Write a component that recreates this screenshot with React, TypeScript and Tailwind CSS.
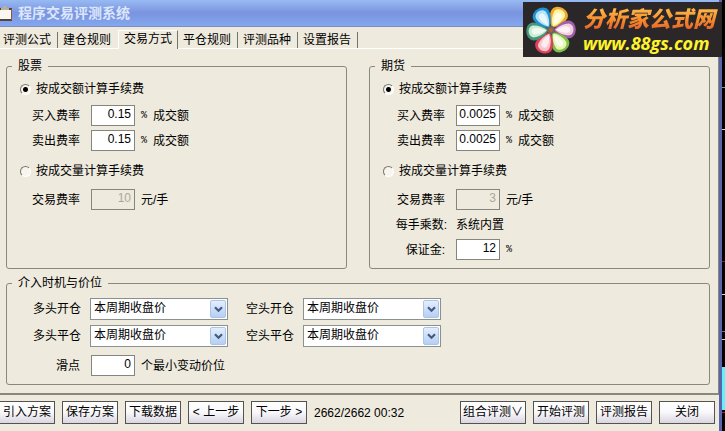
import { useState } from "react";
import type { ReactNode } from "react";

const TABS = ["评测公式", "建仓规则", "交易方式", "平仓规则", "评测品种", "设置报告"];
const PRICES = ["本周期收盘价", "本周期开盘价", "下周期开盘价"];
const PETALS = [
  { angle: 28, color: "#f0a92c", inner: "#fdf3a0" },
  { angle: 88, color: "#9c5fa8", inner: "#f3cfe0" },
  { angle: 146, color: "#7fbf45", inner: "#e6f5b8" },
  { angle: 204, color: "#dc4258", inner: "#f9c3cb" },
  { angle: 265, color: "#46957a", inner: "#c9ecd4" },
  { angle: 326, color: "#2191d6", inner: "#b4e4f8" },
];

function Group({ title, children }: { title: string; children: ReactNode }) {
  return (
    <fieldset className="min-w-0 rounded-[3px] border border-[#8a887c] pb-2">
      <legend className="ml-[5px] px-1.5 leading-[14px]">{title}</legend>
      {children}
    </fieldset>
  );
}

function FeeMode({ name, label, checked, onSelect }: { name: string; label: string; checked: boolean; onSelect: () => void }) {
  return (
    <label className="flex h-5 items-center gap-[5px] pl-[13px]">
      <input
        type="radio"
        name={name}
        checked={checked}
        onChange={onSelect}
        className="size-[11px] appearance-none rounded-full border border-t-[#77756b] border-r-white border-b-white border-l-[#77756b] bg-[#f7f5ee] checked:bg-[radial-gradient(circle,#000_0_2px,#f7f5ee_3px)]"
      />
      {label}
    </label>
  );
}

function Field({ id, label, labelWidth, value, unit, disabled }: { id: string; label: string; labelWidth: string; value: string; unit?: ReactNode; disabled?: boolean }) {
  return (
    <div className="flex h-[21px] items-center">
      <label htmlFor={id} className={`${labelWidth} shrink-0 text-right`}>{label}</label>
      <input
        id={id}
        type="text"
        defaultValue={value}
        disabled={disabled}
        className="ml-[11px] h-[21px] w-11 border border-[#85857d] bg-white pr-[3px] pb-[3px] text-right disabled:bg-[#eeeadd] disabled:text-[#aca899]"
      />
      <span className="ml-1.5 flex items-center gap-1.5">{unit}</span>
    </div>
  );
}

function Percent() {
  return <span className="font-['Liberation_Mono',monospace] text-[10px]">%</span>;
}

function PriceSelect({ id, label }: { id: string; label: string }) {
  return (
    <div className="flex h-[22px] items-center gap-[9px]">
      <label htmlFor={id}>{label}</label>
      <div className="relative">
        <select id={id} className="block h-[22px] w-[138px] appearance-none border border-[#8a9191] bg-white pr-5 pb-0.5 pl-[3px]">
          {PRICES.map(p => <option key={p}>{p}</option>)}
        </select>
        <span className="pointer-events-none absolute top-0.5 right-0.5 flex h-[18px] w-4 items-center justify-center rounded-[2px] border border-[#adc4e4] bg-linear-to-b from-[#e4eefd] to-[#b4cff5]">
          <svg width="9" height="7" viewBox="0 0 9 7">
            <path d="M1 1.2 4.5 4.7 8 1.2" fill="none" stroke="#46597f" strokeWidth="2.2" />
          </svg>
        </span>
      </div>
    </div>
  );
}

function PushButton({ children, wide }: { children: ReactNode; wide?: boolean }) {
  return (
    <button
      type="button"
      className={`${wide ? "w-[66px]" : "w-14"} h-[23px] shrink-0 border border-[#55534d] bg-linear-to-b from-white via-[#f8f7fa] to-[#d9d6e0] pb-0.5 whitespace-nowrap`}
    >
      {children}
    </button>
  );
}

function SiteBanner() {
  return (
    <div className="absolute top-0.5 right-[3px] flex h-[55px] w-[199px] items-center bg-[#2b2729]">
      <svg className="ml-0.5 shrink-0" width="52" height="52" viewBox="-26 -26 52 52">
        {PETALS.map(p => (
          <g key={p.angle} transform={`rotate(${p.angle})`}>
            <path d="M0-2C-5-7-9-12-9-18C-8-27 8-27 9-18C9-12 5-7 0-2Z" fill={p.color} />
            <path d="M0-4C-4-8-6-13-6-18C-5-24 5-24 6-18C6-13 4-8 0-4Z" fill={p.inner} />
            <path d="M0-5C-2-9-4-13-3-17C-2-20 2-20 3-17C4-13 2-9 0-5Z" fill="#fff" opacity="0.7" />
          </g>
        ))}
        <circle r="4" fill="#6d6660" />
        <circle r="2" fill="#b8603c" />
      </svg>
      <div className="ml-1.5 whitespace-nowrap italic">
        <div className="bg-linear-to-b from-[#ffc04d] via-[#f58a2c] to-[#e0552a] bg-clip-text pr-1 text-[22px] leading-[26px] font-black text-transparent">分析家公式网</div>
        <div className="font-['Open_Sans','Noto_Sans',sans-serif] text-[18px] leading-5 font-bold text-[#fff32a]">www.88gs.com</div>
      </div>
    </div>
  );
}

export default function App() {
  const [tab, setTab] = useState(2);
  const [stockMode, setStockMode] = useState("amount");
  const [futureMode, setFutureMode] = useState("amount");

  return (
    <div className="relative flex min-h-screen overflow-hidden bg-black font-['Liberation_Sans','Noto_Sans_CJK_SC',sans-serif] text-[12px] leading-4 text-black">
      <div className="flex min-w-0 flex-1 flex-col border-r-[3px] border-[#5d62ad] bg-[#eeeadd]">
        <header className="flex h-[27px] items-center gap-[5px] border-b border-[#7d8dbd] bg-linear-to-b from-[#97baf2] via-[#7a93df] to-[#84a8ef]">
          <svg width="13" height="15" viewBox="0 0 13 15">
            <path d="M0 2H12V15H0Z" fill="#54453c" />
            <path d="M0 4H11V13H0Z" fill="#fbf8f2" />
            <path d="M1 2H3V0H7V2H9V4H1Z" fill="#b8b09c" />
            <path d="M11 3H12V14H11Z" fill="#8c5a34" />
          </svg>
          <h1 className="text-[14px] font-bold text-[#dce7fb]">程序交易评测系统</h1>
        </header>

        {/* tab strip */}
        <div role="tablist" className="-ml-0.5 flex h-[22px] items-end border-b border-white">
          {TABS.map((name, i) => (
            <button
              key={name}
              role="tab"
              type="button"
              aria-selected={tab === i}
              onClick={() => setTab(i)}
              className={`w-[60px] shrink-0 text-left whitespace-nowrap ${
                tab === i
                  ? "-mb-px h-[19px] border-t border-r border-l border-t-white border-r-[#77756b] border-l-white bg-[#eeeadd] pb-1 pl-[5px]"
                  : `h-4 pl-[5px] ${i + 1 === tab ? "" : "border-r border-[#77756b]"}`
              }`}
            >
              {name}
            </button>
          ))}
        </div>

        <main className="border-r border-b-2 border-[#8a887c] pt-2.5 pr-2 pb-2 pl-1.5">
          <div className="grid grid-cols-2 gap-[22px]">
            <Group title="股票">
              <div className="pt-1.5">
                <FeeMode name="stock" label="按成交额计算手续费" checked={stockMode === "amount"} onSelect={() => setStockMode("amount")} />
                <div className="mt-1.5 flex flex-col gap-1">
                  <Field id="stock-buy" label="买入费率" labelWidth="w-[73px]" value="0.15" unit={<><Percent />成交额</>} />
                  <Field id="stock-sell" label="卖出费率" labelWidth="w-[73px]" value="0.15" unit={<><Percent />成交额</>} />
                </div>
                <div className="mt-2.5">
                  <FeeMode name="stock" label="按成交量计算手续费" checked={stockMode === "volume"} onSelect={() => setStockMode("volume")} />
                </div>
                <div className="mt-2">
                  <Field id="stock-rate" label="交易费率" labelWidth="w-[73px]" value="10" unit="元/手" disabled={stockMode === "amount"} />
                </div>
              </div>
            </Group>

            <Group title="期货">
              <div className="pt-1.5">
                <FeeMode name="future" label="按成交额计算手续费" checked={futureMode === "amount"} onSelect={() => setFutureMode("amount")} />
                <div className="mt-1.5 flex flex-col gap-1">
                  <Field id="future-buy" label="买入费率" labelWidth="w-[75px]" value="0.0025" unit={<><Percent />成交额</>} />
                  <Field id="future-sell" label="卖出费率" labelWidth="w-[75px]" value="0.0025" unit={<><Percent />成交额</>} />
                </div>
                <div className="mt-2.5">
                  <FeeMode name="future" label="按成交量计算手续费" checked={futureMode === "volume"} onSelect={() => setFutureMode("volume")} />
                </div>
                <div className="mt-2 flex flex-col gap-1">
                  <Field id="future-rate" label="交易费率" labelWidth="w-[75px]" value="3" unit="元/手" disabled={futureMode === "amount"} />
                  <div className="flex h-[21px] items-center gap-[9px]">
                    <span className="w-[77px] text-right">每手乘数:</span>
                    <span>系统内置</span>
                  </div>
                  <Field id="margin" label="保证金:" labelWidth="w-[75px]" value="12" unit={<Percent />} />
                </div>
              </div>
            </Group>
          </div>

          <div className="mt-[7px]">
            <Group title="介入时机与价位">
              <div className="flex gap-[18px] pt-2 pl-[26px]">
                <div className="flex flex-col gap-[5px]">
                  <PriceSelect id="long-open" label="多头开仓" />
                  <PriceSelect id="long-close" label="多头平仓" />
                </div>
                <div className="flex flex-col gap-[5px]">
                  <PriceSelect id="short-open" label="空头开仓" />
                  <PriceSelect id="short-close" label="空头平仓" />
                </div>
              </div>
              <div className="mt-2">
                <Field id="slippage" label="滑点" labelWidth="w-[73px]" value="0" unit="个最小变动价位" />
              </div>
            </Group>
          </div>
        </main>

        <footer className="-ml-px flex items-center gap-[7px] pt-1.5 pr-1">
          <PushButton>引入方案</PushButton>
          <PushButton>保存方案</PushButton>
          <PushButton>下载数据</PushButton>
          <PushButton>&lt; 上一步</PushButton>
          <PushButton>下一步 &gt;</PushButton>
          <span className="whitespace-nowrap">2662/2662 00:32</span>
          <div className="ml-auto flex gap-[7px]">
            <PushButton wide>组合评测∨</PushButton>
            <PushButton>开始评测</PushButton>
            <PushButton>评测报告</PushButton>
            <PushButton>关闭</PushButton>
          </div>
        </footer>
      </div>

      {/* edge of the chart window behind the dialog */}
      <svg className="shrink-0" width="3" height="431" viewBox="0 0 3 431">
        <rect y="87" width="3" height="1" fill="#3fc66b" />
        <rect y="129" width="3" height="1" fill="#d8d8d8" />
        <rect y="261" width="3" height="1" fill="#8c2430" />
        <rect y="294" width="3" height="1" fill="#d8d8d8" />
        <rect y="331" width="3" height="1" fill="#7a5cc8" />
        <rect y="339" width="3" height="1" fill="#d8d8d8" />
        <rect y="367" width="3" height="43" fill="#5cf4fa" />
        <rect y="412" width="3" height="1" fill="#8c2450" />
      </svg>

      <SiteBanner />
    </div>
  );
}
